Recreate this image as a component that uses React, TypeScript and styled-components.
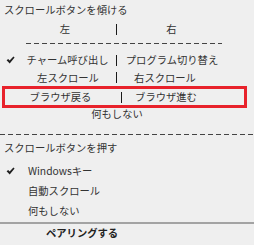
import React from 'react';
import styled, { createGlobalStyle } from 'styled-components';

const GlobalStyle = createGlobalStyle`
  html, body {
    margin: 0;
    padding: 0;
    background: #efefef;
  }
  body {
    font-family: 'Noto Sans CJK JP', 'Noto Sans', sans-serif;
    font-size: 10.3px;
    color: #333;
  }
`;

function Check() {
  return (
    <CheckIcon viewBox="0 0 9 8" width="9" height="8">
      <path d="M0.6 4.2 L2.2 2.9 L3.6 4.6 L7.4 0.4 L8.6 1.5 L3.7 7.4 Z" fill="#1f1f1f" />
    </CheckIcon>
  );
}

type PairProps = {
  left: string;
  right: string;
  lpad: number;
  rpad: number;
  height: number;
  checked?: boolean;
};

function PairRow({ left, right, lpad, rpad, height, checked }: PairProps) {
  return (
    <Row $height={height}>
      {checked && <CheckSlot><Check /></CheckSlot>}
      <LeftCell $pad={lpad}>{left}</LeftCell>
      <Sep />
      <RightCell $pad={rpad}>{right}</RightCell>
    </Row>
  );
}

function App() {
  return (
    <Panel>
      <GlobalStyle />
      <Heading>スクロールボタンを傾ける</Heading>
      <PairRow left="左" right="右" lpad={14} rpad={28} height={18} />
      <ShortDash />
      <PairRow left="チャーム呼び出し" right="プログラム切り替え" lpad={19} rpad={27} height={18} checked />
      <PairRow left="左スクロール" right="右スクロール" lpad={20} rpad={41} height={17} />
      <Highlight>
        <PairRow left="ブラウザ戻る" right="ブラウザ進む" lpad={-5} rpad={34} height={16} />
      </Highlight>
      <Centered>何もしない</Centered>
      <FullDash />
      <Heading $top={3}>スクロールボタンを押す</Heading>
      <List>
        <Item>
          <CheckSlot><Check /></CheckSlot>
          Windowsキー
        </Item>
        <Item>自動スクロール</Item>
        <Item>何もしない</Item>
      </List>
      <Rule />
      <Pairing>ペアリングする</Pairing>
    </Panel>
  );
}

export default App;

const Panel = styled.div`
  width: 254px;
  height: 245px;
  overflow: hidden;
  display: flex;
  flex-direction: column;
  background: #efefef;
`;

const Heading = styled.div<{ $top?: number }>`
  height: 20px;
  line-height: 20px;
  padding-left: 4px;
  margin-top: ${(p) => p.$top ?? 0}px;
  white-space: nowrap;
`;

const Row = styled.div<{ $height: number }>`
  position: relative;
  display: grid;
  grid-template-columns: 116px 1px 1fr;
  align-items: center;
  height: ${(p) => p.$height}px;
  line-height: ${(p) => p.$height}px;
  white-space: nowrap;
`;

const LeftCell = styled.div<{ $pad: number }>`
  text-align: center;
  padding-left: ${(p) => Math.max(p.$pad, 0)}px;
  margin-left: ${(p) => Math.min(p.$pad, 0)}px;
`;

const RightCell = styled.div<{ $pad: number }>`
  text-align: center;
  padding-right: ${(p) => p.$pad}px;
`;

const Sep = styled.div`
  width: 1px;
  height: 11px;
  background: #1a1a1a;
`;

const CheckSlot = styled.span`
  position: absolute;
  left: 6px;
  top: 0;
  display: flex;
  align-items: center;
  height: 100%;
`;

const CheckIcon = styled.svg`
  display: block;
`;

const ShortDash = styled.div`
  margin: 5px 0 7px 26px;
  width: 196px;
  height: 1px;
  background: repeating-linear-gradient(90deg, #444 0 5px, transparent 5px 8px);
`;

const Highlight = styled.div`
  margin: 0 7px 0 2px;
  height: 22px;
  box-sizing: border-box;
  border: 3px solid #e8222b;
`;

const Centered = styled.div`
  height: 12px;
  line-height: 12px;
  text-align: center;
  padding-right: 20px;
`;

const FullDash = styled.div`
  margin-top: 14px;
  height: 1px;
  background: repeating-linear-gradient(90deg, #444 0 5px, transparent 5px 8px);
`;

const List = styled.div`
  margin-top: 3px;
  display: flex;
  flex-direction: column;
`;

const Item = styled.div`
  position: relative;
  height: 20px;
  line-height: 20px;
  padding-left: 28px;
  white-space: nowrap;
`;

const Rule = styled.div`
  margin-top: 1px;
  height: 2px;
  background: #a3a3a3;
`;

const Pairing = styled.div`
  height: 18px;
  line-height: 18px;
  padding-left: 46px;
  font-weight: 700;
  color: #222;
  white-space: nowrap;
`;
